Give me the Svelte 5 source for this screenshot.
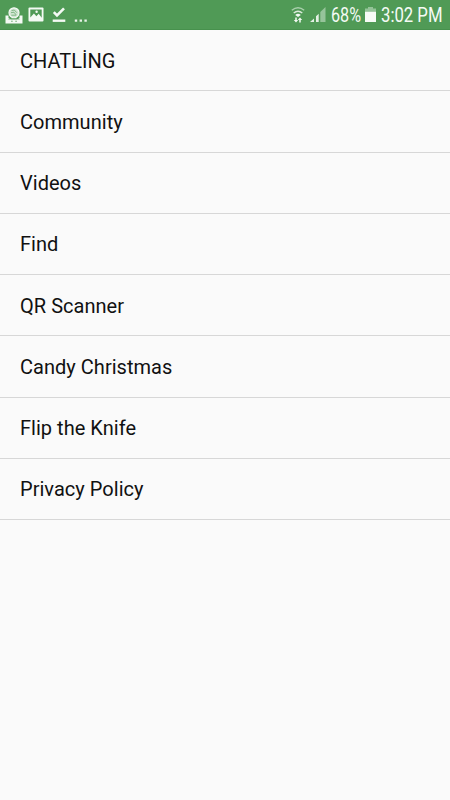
<script lang="ts">
    export let battery = "68%";
    export let time = "3:02 PM";

    const items = [
        "CHATLİNG",
        "Community",
        "Videos",
        "Find",
        "QR Scanner",
        "Candy Christmas",
        "Flip the Knife",
        "Privacy Policy"
    ];
</script>

<div class="screen">
    <header class="status">
        <div class="left">
            <!-- mail face -->
            <svg width="18" height="18" viewBox="0 0 18 18">
                <path d="M.5 9.5h3V12l2.2 1.5h6.6l2.2-1.5V9.5h3V17.5H.5z" fill="#f4faf4" />
                <circle cx="9" cy="6.8" r="5" fill="#d3e6d4" stroke="#f4faf4" stroke-width="1.2" />
                <path d="M6.5 4.6 9.3 4l2.5 2.7M6 6.7l3-.5 2 2.6M6.3 9.2h5" stroke="#6bab70" stroke-width=".8" fill="none" />
                <path d="M3.5 13.3h1.2M6 15.3h1.8M10.2 15.3H12M13.3 13.3h1.2M6.5 12.5h5" stroke="#7fb784" stroke-width="1.1" />
            </svg>
            <!-- picture -->
            <svg class="picture" width="16" height="15" viewBox="0 0 16 15">
                <rect x=".5" y=".5" width="15" height="14" rx="1" fill="#f4faf4" />
                <path d="M2.3 2.5h11.4v8.2l-3-4-2.3 2.5L5.9 6.5 2.3 10.5z" fill="#509a56" />
                <circle cx="8.6" cy="4.8" r="1.2" fill="#f4faf4" />
            </svg>
            <!-- download done -->
            <svg class="check" width="14" height="16" viewBox="0 0 14 16">
                <path d="M1.8 5.2 5 8.5 12 1.3" fill="none" stroke="#f4faf4" stroke-width="2.6" />
                <path d="M.7 13.7h12.6" stroke="#f4faf4" stroke-width="2.4" />
            </svg>
            <svg class="dots" width="14" height="16" viewBox="0 0 14 16">
                <path d="M.8 13.6h2.4M5.6 13.6H8M10.4 13.6h2.4" stroke="#e8f3e8" stroke-width="2.3" />
            </svg>
        </div>
        <div class="right">
            <!-- wifi -->
            <svg width="14" height="16" viewBox="0 0 14 16">
                <path d="M.8 3.2Q7-1.8 13.2 3.2" fill="none" stroke="#a9cfac" stroke-width="1.4" />
                <path d="M2.7 6q4.3-3.6 8.6 0" fill="none" stroke="#dcebdc" stroke-width="1.4" />
                <path d="M4.2 8Q7 5.7 9.8 8L7 10z" fill="#f4faf4" />
                <path d="M5 10.5V14M9 12v3.5" stroke="#f4faf4" stroke-width="1.5" />
                <path d="M2.8 13h4.4L5 15.5zM6.8 13 9 10.4l2.2 2.6z" fill="#f4faf4" />
            </svg>
            <!-- signal -->
            <svg class="signal" width="16" height="15" viewBox="0 0 16 15">
                <path d="M0 15 4 11.5V15zM6 9.3l2.7-2.5V15H6z" fill="#e4f0e4" />
                <path d="M10.3 5 15.5 0v15h-5.2z" fill="#96c49a" />
            </svg>
            <svg class="level" width="30" height="28" viewBox="0 0 30 28">
                <text x="0" y="20.5" textLength="30" lengthAdjust="spacingAndGlyphs">{battery}</text>
            </svg>
            <!-- battery -->
            <svg class="battery" width="11" height="15" viewBox="0 0 11 15">
                <path d="M3 0h5v1.5h3V5H0V1.5h3z" fill="#94c398" />
                <path d="M0 4.8h11V15H0z" fill="#f7fbf7" />
            </svg>
            <svg width="63" height="28" viewBox="0 0 63 28">
                <text x="0" y="20.5" textLength="61.5" lengthAdjust="spacingAndGlyphs">{time}</text>
            </svg>
        </div>
    </header>

    <ul>
        {#each items as item}
            <li>{item}</li>
        {/each}
    </ul>
</div>

<style>
    :global(body) {
        margin: 0;
        background: #fafafa;
    }

    .screen {
        min-height: 800px;
        background: #fafafa;
        font-family: Roboto, sans-serif;
    }

    .status {
        display: flex;
        justify-content: space-between;
        box-sizing: border-box;
        height: 30px;
        padding: 0 6px 0 5px;
        background: #509a56;
        border-bottom: 1px solid #47914d;
    }

    .left, .right {
        display: flex;
        align-items: center;
    }

    svg {
        display: block;
        flex: none;
        overflow: visible;
    }

    .left .picture {
        margin-left: 5px;
    }

    .left .check {
        margin-left: 8px;
    }

    .left .dots {
        margin-left: 8px;
    }

    .signal {
        margin-left: 5px;
    }

    .level {
        margin-left: 5px;
    }

    .battery {
        margin: 0 5px 0 4px;
    }

    text {
        font-size: 19.5px;
        fill: #f5faf5;
    }

    ul {
        list-style: none;
        margin: 0;
        padding: 0;
    }

    li {
        box-sizing: border-box;
        height: 61.25px;
        padding-left: 20px;
        line-height: 61px;
        font-size: 20px;
        letter-spacing: 0.03px;
        color: #111;
        border-bottom: 1px solid #d7d7d7;
    }

    li:nth-child(4n + 1), li:nth-child(4n + 2) {
        line-height: 62px;
    }
</style>
